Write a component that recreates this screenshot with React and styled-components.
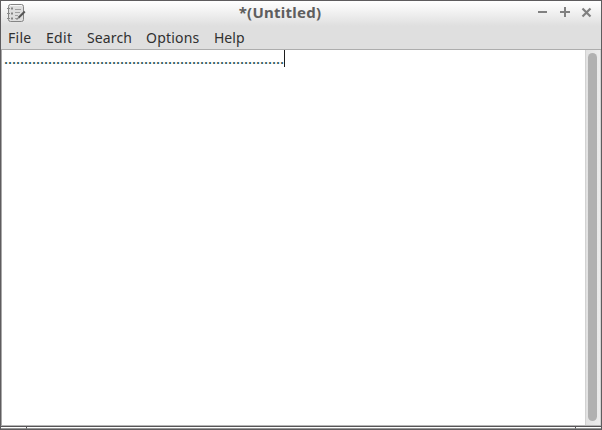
import React from 'react';
import styled, { createGlobalStyle } from 'styled-components';

const Global = createGlobalStyle`
  * { box-sizing: border-box; }
  html, body { margin: 0; padding: 0; overflow: hidden; }
`;
const Window = styled.main`
  width: 602px;
  height: 430px;
  display: flex;
  flex-direction: column;
  border: 1px solid #5e5c5e;
  background: #fff;
  font-family: "Noto Sans", sans-serif;
  color: #303030;
`;
const Header = styled.header`
  height: 49px;
  flex: none;
  border-bottom: 1px solid #adadad;
  background: linear-gradient(#fff 0, #f4f4f4 9px, #dfdfdf 25px, #dfdfdf 100%);
`;
const TitleBar = styled.div`
  height: 25px;
  display: grid;
  grid-template-columns: 230px 98px 1fr;
  align-items: center;
`;
const AppIcon = styled.svg`
  width: 20px;
  height: 20px;
  margin: 0 0 1px 5px;
  display: block;
`;
const Title = styled.h1`
  margin: 0;
  height: 23px;
  text-align: center;
  font-size: 15px;
  line-height: 21px;
  letter-spacing: .25px;
  font-weight: 700;
  color: #5e5e5e;
  white-space: nowrap;
`;
const Controls = styled.div`
  display: flex;
  justify-content: flex-end;
  gap: 10px;
  padding: 0 8px 3px 0;
`;
const Control = styled.button`
  width: 12px;
  height: 12px;
  padding: 0;
  border: 0;
  background: none;
  svg { display: block; }
`;
const Menu = styled.nav`
  display: flex;
  height: 23px;
  padding-left: 7px;
`;
const MenuItem = styled.span`
  width: ${({ $width }) => $width}px;
  flex: none;
  font-size: 14px;
  line-height: 23px;
  letter-spacing: ${({ $tracking }) => $tracking || 0}px;
`;
const Editor = styled.section`
  height: 376px;
  display: flex;
  border-left: 1px solid #a8a8a8;
  border-bottom: 1px solid #b5b5b5;
`;
const Document = styled.div`
  flex: 1;
  display: flex;
  align-items: flex-start;
  padding-left: 2px;
`;
const TextLine = styled.span`
  width: 280px;
  height: 17px;
  font-size: 15px;
  line-height: 17px;
  letter-spacing: ${4 - 15 * 0.268}px;
  color: #1c4c4a;
  -webkit-text-stroke: .15px #1c4c4a;
  white-space: nowrap;
`;
const Caret = styled.i`
  width: 1px;
  height: 17px;
  background: #1d1d1d;
`;
const Scrollbar = styled.div`
  width: 16px;
  padding: 3px 2px;
  border: solid #d2d2d2;
  border-width: 0 1px;
  background: linear-gradient(90deg, #e2e2e2, #ececec);
`;
const Thumb = styled.div`
  width: 9px;
  height: 368px;
  border-radius: 5px;
  background: #b1b1b1;
`;
const Footer = styled.footer`
  height: 3px;
  display: grid;
  grid-template-columns: 25px 1fr 26px;
  border-top: 1px solid #565456;
`;
const FooterCell = styled.span`
  border-bottom: 1px solid #969696;
  border-left: ${({ $divided }) => $divided ? '1px solid #565456' : '0'};
`;

const items = [['File', 38, .25], ['Edit', 41, .3], ['Search', 59, .12], ['Options', 68, .2], ['Help', 40, 0]];

export default function App() {
  return <><Global /><Window>
    <Header>
      <TitleBar>
        <AppIcon viewBox="0 0 20 20">
          <rect x="2.5" y="1.5" width="15" height="17" rx="2" fill="#dedede" stroke="#858585" />
          <path d="M4 2.5h12" stroke="#f7f7f7" />
          <path d="M1 5.5h3M1 10.5h3M1 15.5h3" stroke="#8a8a8a" />
          <path d="M5 5.5h2M5 10.5h2M5 15.5h2" stroke="#858585" strokeWidth="2" />
          <path d="M9 6.5h6M9 9.5h5M9 12.5h3M9 15.5h3" stroke="#a0a0a0" />
          <path d="M18.8 8.5L12.5 14.8" stroke="#555" strokeWidth="2" />
          <path d="M12.5 14.8L10.5 16.5" stroke="#888" strokeWidth="1.4" />
        </AppIcon>
        <Title>*(Untitled)</Title>
        <Controls>
          <Control aria-label="Minimize"><svg width="12" height="12"><path d="M1 6h9" stroke="#808080" strokeWidth="2" /></svg></Control>
          <Control aria-label="Maximize"><svg width="12" height="12"><path d="M1 6h10M6 1v10" stroke="#808080" strokeWidth="2" /></svg></Control>
          <Control aria-label="Close"><svg width="12" height="12"><path d="M1.5 2.5l8 8M9.5 2.5l-8 8" stroke="#808080" strokeWidth="2.2" /></svg></Control>
        </Controls>
      </TitleBar>
      <Menu>{items.map(([label, width, tracking]) => <MenuItem key={label} $width={width} $tracking={tracking}>{label}</MenuItem>)}</Menu>
    </Header>
    <Editor>
      <Document><TextLine>{'.'.repeat(70)}</TextLine><Caret /></Document>
      <Scrollbar><Thumb /></Scrollbar>
    </Editor>
    <Footer><FooterCell /><FooterCell $divided /><FooterCell $divided /></Footer>
  </Window></>;
}
